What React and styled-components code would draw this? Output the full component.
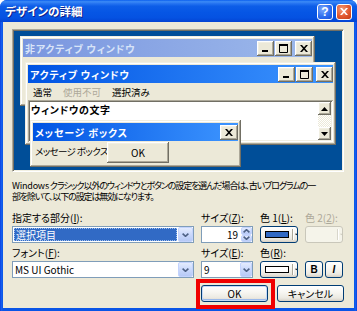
import React from "react";
import styled, { createGlobalStyle, css } from "styled-components";

const JP = `"Noto Sans CJK JP", "Noto Sans", sans-serif`;

const GlobalStyle = createGlobalStyle`
  html, body { margin: 0; padding: 0; background: #ffffff; }
  body { font-family: ${JP}; }
  * { box-sizing: border-box; }
`;

const raised = css`
  background: #ece9d8;
  box-shadow: inset -1px -1px 0 #716f64, inset 1px 1px 0 #ffffff,
    inset -2px -2px 0 #aca899, inset 2px 2px 0 #f1efe2;
`;

const Dialog = styled.div`
  position: relative;
  width: 357px;
  height: 311px;
  display: flex;
  flex-direction: column;
  background: linear-gradient(90deg, #0831d9 0, #1661f0 1px, #0a55e6 3px, #0a55e6 354px, #1661f0 356px, #0831d9 357px);
  border-radius: 7px 7px 0 0;
  font-family: ${JP};
  font-feature-settings: "palt" 1;
  color: #000;
`;

const TitleBar = styled.div`
  flex: none;
  height: 22px;
  display: flex;
  align-items: center;
  padding: 0 5px 0 5px;
  border-radius: 7px 7px 0 0;
  background: linear-gradient(180deg, #0b5fee 0%, #3d8cf6 8%, #2a78f2 14%, #0d5de8 28%, #0656e5 55%, #0552e2 80%, #0444d3 100%);
`;

const TitleText = styled.span`
  flex: 1;
  color: #fff;
  font-size: 11.5px;
  font-weight: 700;
  text-shadow: 1px 1px 0 #0f1f8a;
  white-space: nowrap;
`;

const TitleButtons = styled.div`
  display: flex;
  gap: 3px;
  margin-top: 1px;
`;

const TitleButton = styled.div`
  width: 16px;
  height: 16px;
  border: 1px solid #ffffff;
  border-radius: 3px;
  display: flex;
  align-items: center;
  justify-content: center;
  color: #fff;
  font-family: "Liberation Sans", sans-serif;
  font-weight: 700;
  font-size: 12px;
  line-height: 1;
  background: ${(p) =>
    p.$close
      ? "radial-gradient(circle at 35% 30%, #f39a78 0%, #e2582f 55%, #c33b12 100%)"
      : "radial-gradient(circle at 35% 30%, #7eabfc 0%, #2f6ff0 55%, #1a4fd6 100%)"};
`;

const Frame = styled.div`
  flex: 1;
  display: flex;
  min-height: 0;
  padding: 0 3px 3px;
`;

const Body = styled.div`
  flex: 1;
  min-width: 0;
  display: flex;
  flex-direction: column;
  background: #ece9d8;
  padding: 7px 10px 0 9px;
`;

const Preview = styled.div`
  position: relative;
  flex: none;
  height: 143px;
  background: #004e98;
  border: 1px solid;
  border-color: #aca899 #ffffff #ffffff #aca899;
  box-shadow: inset 1px 1px 0 #716f64, inset -1px -1px 0 #f1efe2;
  overflow: hidden;
`;

const DesktopWindow = styled.div`
  position: absolute;
  left: ${(p) => p.$x}px;
  top: ${(p) => p.$y}px;
  width: ${(p) => p.$w}px;
  height: ${(p) => p.$h}px;
  padding: 3px;
  display: flex;
  flex-direction: column;
  background: #ece9d8;
  box-shadow: inset -1px -1px 0 #716f64, inset 1px 1px 0 #f1efe2,
    inset -2px -2px 0 #aca899, inset 2px 2px 0 #ffffff;
`;

const Caption = styled.div`
  flex: none;
  height: 18px;
  display: flex;
  align-items: center;
  padding: 0 0 0 2px;
  background: ${(p) =>
    p.$active
      ? "linear-gradient(90deg, #0054e3, #3d95ff)"
      : "linear-gradient(90deg, #7a96df, #9db9eb)"};
`;

const CaptionText = styled.span`
  flex: 1;
  font-size: 10px;
  font-weight: 700;
  letter-spacing: 0.8px;
  white-space: nowrap;
  color: ${(p) => (p.$active ? "#ffffff" : "#d8e4f8")};
`;

const CaptionButton = styled.div`
  flex: none;
  width: ${(p) => p.$w || 17}px;
  height: ${(p) => p.$h || 15}px;
  margin-left: ${(p) => p.$gap || 0}px;
  display: flex;
  align-items: center;
  justify-content: center;
  ${raised};
`;

const MenuBar = styled.div`
  flex: none;
  height: 17px;
  display: flex;
  align-items: center;
  gap: 11px;
  padding-left: 5px;
  font-size: 9.5px;
  white-space: nowrap;
`;

const MenuItem = styled.span`
  color: ${(p) => (p.$disabled ? "#aca899" : "#000000")};
`;

const Client = styled.div`
  flex: 1;
  display: flex;
  padding: 2px;
  box-shadow: inset 1px 1px 0 #aca899, inset -1px -1px 0 #ffffff,
    inset 2px 2px 0 #716f64, inset -2px -2px 0 #f1efe2;
`;

const ClientText = styled.div`
  flex: 1;
  background: #ffffff;
  font-size: 10px;
  font-weight: 700;
  letter-spacing: 0.6px;
  line-height: 13px;
  padding: 1px 0 0 1px;
  white-space: nowrap;
`;

const ScrollBar = styled.div`
  flex: none;
  width: 13px;
  display: flex;
  flex-direction: column;
  justify-content: space-between;
  background: repeating-conic-gradient(#ece9d8 0 25%, #ffffff 0 50%) 0 0 / 2px 2px;
`;

const MsgBody = styled.div`
  flex: 1;
  display: flex;
  align-items: flex-start;
  padding: 1px 0 0 2px;
`;

const MsgText = styled.span`
  flex: 0 0 72px;
  overflow: hidden;
  white-space: nowrap;
  font-size: 9.5px;
  letter-spacing: -0.6px;
  line-height: 12px;
  margin-top: 3px;
`;

const ClassicButton = styled.div`
  flex: none;
  width: 62px;
  height: 21px;
  display: flex;
  align-items: center;
  justify-content: center;
  font-size: 10px;
  ${raised};
`;

const Description = styled.div`
  margin-top: 8px;
  font-size: 9px;
  letter-spacing: -1.1px;
  line-height: 11px;
  white-space: nowrap;
`;

const Latin = styled.span`
  letter-spacing: -0.2px;
`;

const Form = styled.div`
  margin-top: 10px;
  display: grid;
  grid-template-columns: 182px 52px 38px 38px;
  grid-template-rows: 12px 17px 14px 17px;
  column-gap: 7px;
  row-gap: 2px;
`;

const Label = styled.span`
  align-self: end;
  font-size: 10px;
  line-height: 12px;
  white-space: nowrap;
  color: ${(p) => (p.$disabled ? "#aca899" : "#000000")};
  u {
    text-decoration-thickness: 1px;
    text-underline-offset: 1px;
  }
`;

const Field = styled.div`
  height: 17px;
  display: flex;
  align-items: stretch;
  border: 1px solid #7f9db9;
  background: #ffffff;
`;

const FieldValue = styled.div`
  flex: 1;
  display: flex;
  align-items: center;
  justify-content: ${(p) => (p.$right ? "flex-end" : "flex-start")};
  margin: 1px;
  padding: 0 ${(p) => (p.$right ? "2px" : "0")} 0 ${(p) => (p.$selected ? "2px" : "1px")};
  font-size: 10px;
  white-space: nowrap;
  ${(p) =>
    p.$selected &&
    css`
      background: #316ac5;
      color: #ffffff;
      outline: 1px dotted #9fc0f0;
      outline-offset: -1px;
    `}
`;

const XPArrowButton = styled.div`
  flex: none;
  width: ${(p) => p.$w || 15}px;
  display: flex;
  align-items: center;
  justify-content: center;
  border: 1px solid #c3d3fd;
  border-radius: 2px;
  background: linear-gradient(180deg, #e4ecfe 0%, #ccdafc 45%, #b6c9f6 100%);
`;

const SpinColumn = styled.div`
  flex: none;
  width: 11px;
  display: flex;
  flex-direction: column;
`;

const SpinButton = styled(XPArrowButton)`
  flex: 1;
  width: auto;
`;

const XPButton = styled.div`
  position: relative;
  height: 17px;
  display: flex;
  align-items: center;
  justify-content: center;
  gap: 1px;
  border: 1px solid ${(p) => (p.$disabled ? "#c9c7ba" : "#003c74")};
  border-radius: 3px;
  font-size: 10px;
  color: ${(p) => (p.$disabled ? "#aca899" : "#000000")};
  background: ${(p) =>
    p.$disabled
      ? "#f5f4ea"
      : "linear-gradient(180deg, #ffffff 0%, #f6f5f0 45%, #ebe9e1 80%, #d6d0c5 100%)"};
`;

const ColorButton = styled(XPButton)`
  justify-content: flex-start;
  padding: 0 0 0 4px;
`;

const Swatch = styled.span`
  flex: none;
  width: 24px;
  height: 7px;
  border: ${(p) => (p.$blank ? "none" : "1px solid #000000")};
  background: ${(p) => p.$color || "transparent"};
`;

const Separator = styled.span`
  width: 1px;
  height: 11px;
  margin: 0 1px 0 2px;
  background: ${(p) => (p.$disabled ? "#d8d6cb" : "#aca899")};
  box-shadow: 1px 0 0 #ffffff;
`;

const ToggleRow = styled.div`
  display: flex;
  gap: 2px;
`;

const ToggleButton = styled(XPButton)`
  width: 18px;
  font-family: "Liberation Sans", sans-serif;
  font-weight: 700;
  font-style: ${(p) => (p.$italic ? "italic" : "normal")};
  font-size: 10px;
`;

const ButtonRow = styled.div`
  margin-top: 7px;
  display: flex;
  justify-content: flex-end;
  gap: 9px;
`;

const PushButton = styled(XPButton)`
  width: 67px;
  ${(p) =>
    p.$default &&
    css`
      box-shadow: inset 0 0 0 1px #c4d9f7, inset 0 -1px 0 1px #9ab9ea;
    `}
`;

const Highlight = styled.span`
  position: absolute;
  top: -7px;
  left: -6px;
  right: -8px;
  bottom: -8px;
  border: 4px solid #f00000;
  pointer-events: none;
`;

const MinGlyph = () => (
  <svg width="9" height="9" viewBox="0 0 9 9">
    <rect x="1" y="6" width="6" height="2" fill="#000" />
  </svg>
);

const MaxGlyph = () => (
  <svg width="9" height="9" viewBox="0 0 9 9">
    <path d="M0.5 0.5H8.5V8.5H0.5Z" fill="none" stroke="#000" />
    <rect x="0" y="0" width="9" height="2" fill="#000" />
  </svg>
);

const CloseGlyph = ({ color = "#000" }) => (
  <svg width="8" height="7" viewBox="0 0 8 7">
    <path d="M0 0h2l2 2.2L6 0h2L5 3.5 8 7H6L4 4.8 2 7H0l3-3.5z" fill={color} />
  </svg>
);

const TriUp = () => (
  <svg width="7" height="4" viewBox="0 0 7 4">
    <path d="M3.5 0L7 4H0z" fill="#000" />
  </svg>
);

const TriDown = ({ color = "#000", w = 7, h = 4 }) => (
  <svg width={w} height={h} viewBox="0 0 7 4">
    <path d="M0 0h7L3.5 4z" fill={color} />
  </svg>
);

const Chevron = ({ up }) => (
  <svg width="7" height="4" viewBox="0 0 7 4">
    <path
      d={up ? "M0.6 3.4L3.5 0.7 6.4 3.4" : "M0.6 0.6L3.5 3.3 6.4 0.6"}
      fill="none"
      stroke="#4d6185"
      strokeWidth="1.6"
    />
  </svg>
);

const CaptionControls = ({ close }) =>
  close ? (
    <CaptionButton $w={18} $h={15}>
      <CloseGlyph />
    </CaptionButton>
  ) : (
    <>
      <CaptionButton>
        <MinGlyph />
      </CaptionButton>
      <CaptionButton $gap={1}>
        <MaxGlyph />
      </CaptionButton>
      <CaptionButton $gap={3}>
        <CloseGlyph />
      </CaptionButton>
    </>
  );

export default function App() {
  return (
    <>
      <GlobalStyle />
      <Dialog>
        <TitleBar>
          <TitleText>デザインの詳細</TitleText>
          <TitleButtons>
            <TitleButton>?</TitleButton>
            <TitleButton $close>
              <CloseGlyph color="#fff" />
            </TitleButton>
          </TitleButtons>
        </TitleBar>
        <Frame>
          <Body>
            <Preview>
              <DesktopWindow $x={7} $y={6} $w={295} $h={70}>
                <Caption>
                  <CaptionText>非アクティブ ウィンドウ</CaptionText>
                  <CaptionControls />
                </Caption>
              </DesktopWindow>
              <DesktopWindow $x={12} $y={32} $w={311} $h={83}>
                <Caption $active>
                  <CaptionText $active>アクティブ ウィンドウ</CaptionText>
                  <CaptionControls />
                </Caption>
                <MenuBar>
                  <MenuItem>通常</MenuItem>
                  <MenuItem $disabled>使用不可</MenuItem>
                  <MenuItem>選択済み</MenuItem>
                </MenuBar>
                <Client>
                  <ClientText>ウィンドウの文字</ClientText>
                  <ScrollBar>
                    <CaptionButton $w={13} $h={13}>
                      <TriUp />
                    </CaptionButton>
                    <CaptionButton $w={13} $h={13}>
                      <TriDown />
                    </CaptionButton>
                  </ScrollBar>
                </Client>
              </DesktopWindow>
              <DesktopWindow $x={17} $y={90} $w={211} $h={47}>
                <Caption $active>
                  <CaptionText $active>メッセージ ボックス</CaptionText>
                  <CaptionControls close />
                </Caption>
                <MsgBody>
                  <MsgText>メッセージ ボックスの文字</MsgText>
                  <ClassicButton>OK</ClassicButton>
                </MsgBody>
              </DesktopWindow>
            </Preview>

            <Description>
              <Latin>Windows</Latin> クラシック以外のウィンドウとボタンの設定を選んだ場合は、古いプログラムの一
              <br />
              部を除いて、以下の設定は無効になります。
            </Description>

            <Form>
              <Label>
                指定する部分(<u>I</u>):
              </Label>
              <Label>
                サイズ(<u>Z</u>):
              </Label>
              <Label>
                色 1(<u>L</u>):
              </Label>
              <Label $disabled>
                色 2(<u>2</u>):
              </Label>

              <Field>
                <FieldValue $selected>選択項目</FieldValue>
                <XPArrowButton>
                  <Chevron />
                </XPArrowButton>
              </Field>
              <Field>
                <FieldValue $right>19</FieldValue>
                <SpinColumn>
                  <SpinButton>
                    <Chevron up />
                  </SpinButton>
                  <SpinButton>
                    <Chevron />
                  </SpinButton>
                </SpinColumn>
              </Field>
              <ColorButton>
                <Swatch $color="#316ac5" />
                <Separator />
                <TriDown w={5} h={3} />
              </ColorButton>
              <ColorButton $disabled>
                <Swatch $blank />
                <Separator $disabled />
                <TriDown color="#c9c7ba" w={5} h={3} />
              </ColorButton>

              <Label>
                フォント(<u>F</u>):
              </Label>
              <Label>
                サイズ(<u>E</u>):
              </Label>
              <Label>
                色(<u>R</u>):
              </Label>
              <span />

              <Field>
                <FieldValue>MS UI Gothic</FieldValue>
                <XPArrowButton>
                  <Chevron />
                </XPArrowButton>
              </Field>
              <Field>
                <FieldValue>9</FieldValue>
                <XPArrowButton $w={12}>
                  <Chevron />
                </XPArrowButton>
              </Field>
              <ColorButton>
                <Swatch $color="#ffffff" />
                <Separator />
                <TriDown w={5} h={3} />
              </ColorButton>
              <ToggleRow>
                <ToggleButton>B</ToggleButton>
                <ToggleButton $italic>I</ToggleButton>
              </ToggleRow>
            </Form>

            <ButtonRow>
              <PushButton $default>
                OK
                <Highlight />
              </PushButton>
              <PushButton>キャンセル</PushButton>
            </ButtonRow>
          </Body>
        </Frame>
      </Dialog>
    </>
  );
}
